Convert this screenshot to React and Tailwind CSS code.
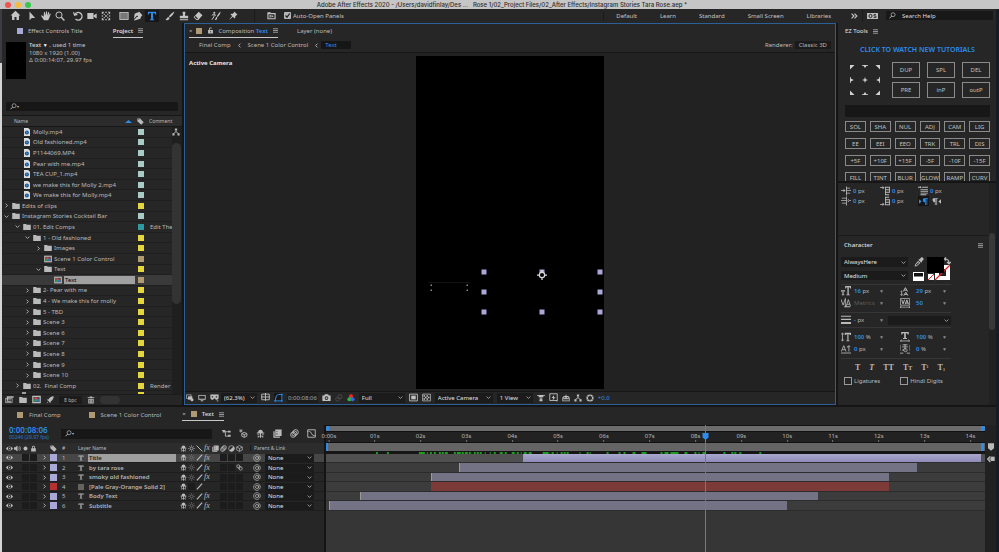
import React from 'react';
import clsx from 'clsx';

// All glyphs are drawn on a 12x12 grid
const line = { fill: 'none', stroke: 'currentColor', strokeWidth: 1.2 };
const glyphs = {
  home: <path d="M6 .8 0.6 6h1.6v5h2.7V7.6h2.2V11h2.7V6h1.6z" />,
  cursor: <path d="M3 .5v10.6l2.7-2.6h4.1z" />,
  hand: <path d="M3.2 7 1.4 5.4c-.8-.5-1.4.3-1 .9L3.6 11h5l1.4-3 1.6-4.2c.2-.8-.9-1.1-1.2-.4L9.2 6l.6-4c0-.8-1.1-1-1.3-.1L7.6 5.3 7.2 1c-.1-.8-1.3-.8-1.3 0v4.3L4.7 1.7c-.3-.8-1.4-.4-1.2.4z" />,
  zoom: <g {...line}><circle cx="4.8" cy="4.8" r="3.7" /><path d="m7.5 7.5 3.8 3.8" strokeWidth="1.7" /></g>,
  search: <g {...line}><circle cx="7" cy="4.6" r="3.4" /><path d="M4.6 7 .8 10.8" strokeWidth="1.6" /></g>,
  rotate: <g {...line} strokeWidth="1.5"><path d="M2.2 4.2A4.6 4.6 0 1 1 3 9.6" /><path d="M.6 1.6 2 5l3.3-1" /></g>,
  camera: <path d="M.4 2.5h7.4v7H.4zM8.2 5.2l3.4-2.3v6.2L8.2 6.8z" />,
  anchor: <g><path d="M1 1h2.5v1.2H2.2v1.3H1zM8.5 1H11v2.5H9.8V2.2H8.5zM1 8.5h1.2v1.3h1.3V11H1zM9.8 8.5H11V11H8.5V9.8h1.3zM5 1h2v1.2H5zM5 9.8h2V11H5zM1 5h1.2v2H1zM9.8 5H11v2H9.8z" /><path d="M3 3l2 .5L3.5 5zM9 3l-2 .5L8.5 5zM3 9l2-.5L3.5 7zM9 9l-2-.5L8.5 7zM5 5h2v2H5z" /></g>,
  rect: <rect x="1" y="1.7" width="10" height="8.6" fill="#777" stroke="currentColor" />,
  pen: <path d="M7.2.7 11.3 5 10 6.2 8.7 9.4 1.9 11.3l-.7-.6 3.4-3.5 1.1.1.2-1.4-1.1-.4-3.7 3.9.9-6L5 1.9 6 2z" />,
  type: <path d="M1 1h10v3.2H9.8C9.6 2.8 9 2.4 7.2 2.4v6.9c0 .6.3.8 1.4.8V11H3.4v-.9c1.1 0 1.4-.2 1.4-.8V2.4C3 2.4 2.4 2.8 2.2 4.2H1z" />,
  brush: <path d="M11.4.6c-2.9 1.5-5.3 3.5-6.8 6l1.3 1.2C8.4 6 10.3 3.6 11.4.6zM4 7.1C2 7.3 2.8 9.5.4 10.6 3 11.7 5.5 10.6 5.3 8.4z" />,
  stamp: <path d="M4.6 1h2.8c.9 1.4-.5 2.5-.2 4.7H11v3H1v-3h3.8c.3-2.2-1.1-3.3-.2-4.7zM1 9.8h10V11H1z" />,
  eraser: <path d="M6.8.8 11.4 5 6.3 10.9H4.2L.7 7.6zM2 7.4 5 10l1-1.1L3 6.1z" fillRule="evenodd" />,
  roto: <g><path d="M11.7.6C9.4 2.2 8 4 7 6.5l1 .8c2-2 3.2-4 3.7-6.7zM6.5 7C5.4 8 6 9.5 4.3 10.7c2 .4 3.6-.7 3.2-2.8z" /><circle cx="4" cy="2" r="1.2" /><path d="M3.3 3.5 1 5.3M3.8 3.5 3.5 7 1 10.5M4 4l2 1.5" {...line} /></g>,
  pin: <path d="M7 .6 11.4 5l-1.2.4-2 2.2.1 1.7-.8.7-2.3-2.3L1 11.3l-.3-.3 3.6-4.2L2 4.5l.8-.7 1.6.1 2.3-2z" />,
  folderCut: <path d="M.5 1.5h4l1 1.2h6V11h-11zM2 4.2v5.4h8V4.2zM3.4 5.2H5v3.4H3.4zM6 5.2l3 1.7-3 1.7z" fillRule="evenodd" />,
  folder: <path d="M.3 1.5h4.3l1 1.3h6.1v7.7H.3z" />,
  film: <g><path d="M1.5 0h6.2l2.8 2.8V12h-9z" fill="#dcdcdc" /><circle cx="5.8" cy="6.6" r="3" fill="#1d4f8e" /><path d="m4.8 5 2.6 1.5-2.6 1.6z" fill="#4ea0ee" /></g>,
  comp: <g><path d="M.3 1h11.4v10H.3z" fill="#c4c4c4" /><path d="M1.8 2.6h8.4v6.8H1.8z" fill="#4b4b4b" /><circle cx="5.3" cy="4.8" r="1.9" fill="#df4434" /><circle cx="7.6" cy="7" r="1.9" fill="#3974d0" /><circle cx="4.4" cy="7.4" r="1.7" fill="#2e9f57" /></g>,
  flow: <g><path d="M4.3.6h3.4v3.2H4.3zM.6 8h3.2v3.2H.6zM8.2 8h3.2v3.2H8.2z" /><path d="M6 3.5v2.7M2.2 8.2 6 5.6l3.8 2.6" {...line} /></g>,
  tag: <path d="M.6 1h4.8l6.1 6.1-4.3 4.3L.6 5.5zM2.4 2v1.5h1.5V2z" fillRule="evenodd" />,
  interpret: <g><path d="M2.5 1.5h9v2.2h-7v4h-2z" /><path d="M.5 4.5h9v5.6h-9z" fill="none" stroke="currentColor" /><path d="M2 6h2v1H2zM5 6h3v1H5zM2 8h6v1H2z" /></g>,
  rocket: <path d="M11.5.5C7.5.5 5 2.6 4 4.8L1 5.6l2.2 1.5 1.5 1.5L6.5 11l.8-3C9.7 6.7 11.5 4.3 11.5.5zM2.7 8.5.6 11.4l3-2z" />,
  trash: <path d="M4.3.7h3.4v1H11v1.4H1V1.7h3.3zM1.9 4h8.2v7.3H1.9zm1.7 1.2v4.9h.8V5.2zm2 0v4.9h.8V5.2zm2 0v4.9h.8V5.2z" fillRule="evenodd" />,
  lock: <path d="M2 5.5h8v5.7H2zM3.5 5.5V3.6a2.5 2.5 0 0 1 5 0v1.9H7.2V3.7a1.2 1.2 0 0 0-2.4 0v1.8z" />,
  unlock: <path d="M1.8 5h8.4v6.3H1.8zM5.5 7v2.4h1V7zM3.4 5V3.3c0-3.2 4.8-3.5 5.3-.8H7.3c-.5-1-2.5-.7-2.5 1V5z" fillRule="evenodd" />,
  multi: <g><path d="M.7 1.2h7v5.6h-7z" fill="none" stroke="currentColor" /><path d="M3 3.5h6.5v5H3z" /><circle cx="9" cy="8.7" r="2.3" /></g>,
  monitor: <path d="M.5 1.5h11v7h-11zm1.2 1.2v4.6h8.6V2.7zM4 9.3h4v1.5H4z" fillRule="evenodd" />,
  mask: <path d="M.5 2h11v4.5C11.5 8 10 9 8.5 9S6.7 7 6 7s-1 2-2.5 2-3-1-3-2.5zM2.3 4.3v1.8h2V4.3zm5.3 0v1.8h2V4.3zM8.5 10h3L10 11.7z" fillRule="evenodd" />,
  grid: <g {...line}><path d="M1 1.5h10V9H1zM6 0v10.5M0 5.3h12" /></g>,
  shape: <g fill="none" stroke="#2d8ceb" strokeWidth="1.3"><path d="M1.5 10.5 3 4c1.5-2 4-2.3 7.5-2v8.5z" /><path d="M.5 9.5h2v2h-2zM9.5 9.5h2v2h-2zM9.5 1h2v2h-2z" fill="#2d8ceb" strokeWidth=".2" /></g>,
  snapshot: <path d="M3.8 1.5h4.4l.8 1.7h2.5v7.5H.5V3.2H3zM6 4.3a2.5 2.5 0 1 0 0 5 2.5 2.5 0 0 0 0-5zm0 1.2a1.3 1.3 0 1 1 0 2.6 1.3 1.3 0 0 1 0-2.6z" fillRule="evenodd" />,
  ghost: <g {...line} stroke="#505050"><circle cx="7.5" cy="4" r="3" /><circle cx="3.7" cy="8" r="2.7" /></g>,
  rgb: <g><circle cx="6" cy="3.3" r="3" fill="#f02b26" /><circle cx="3.6" cy="7.7" r="3" fill="#25bd3b" /><circle cx="8.3" cy="7.7" r="3" fill="#3467ef" /></g>,
  roi: <g><path d="M.8 1.5h10.4v9H.8z" {...line} /><path d="M3 3.5h6v5H3z" /></g>,
  checker: <g><path d="M.8 1.5h10.4v9H.8z" {...line} strokeWidth="1" /><path d="M2 3h2v2H2zM6 3h2v2H6zM4 5h2v2H4zM8 5h2v2H8zM2 7h2v2H2zM6 7h2v2H6z" /></g>,
  pixel: <path d="M0 1.5h12v1.2H9.5v2h-7v-2H0zM4 5.5h4v1.2H6.6V8h1.7v3H3.7V8h1.7V6.7H4z" />,
  fast: <g><path d="M1 1h10v9H1z" {...line} /><path d="M6.8 2.5 3.5 6.7h2L4.7 10l4-4.5H6.5zM9 10h3l-1.5 1.7z" /></g>,
  timelineIcon: <path d="M.5 5h1.2v4.6h8.6V5h1.2v6H.5zM5.3 1h1.4v2H10v5H2V3h3.3zM3.4 4.5v2h1.5v-2zm3.7 0v2h1.5v-2z" fillRule="evenodd" />,
  aperture: <g><circle cx="6" cy="6" r="4.2" fill="none" stroke="currentColor" strokeWidth="2.3" /><path d="M6 .8v4M10.5 3.5 7 5.5M10.5 8.5 7 6.5M6 11.2v-4M1.5 8.5 5 6.5M1.5 3.5 5 5.5" stroke="#262626" strokeWidth=".7" /></g>,
  network: <g><path d="M0 2h4M4.5 4.5v5h4M4 3.7h4" {...line} /><path d="M1 1.5h3.5v3H1zM8 2.2h3.5v2.6H8zM8 7.7h3.5v2.6H8z" /></g>,
  draft: <g {...line}><path d="M7 4.5 10.5 6v3.5L7 11.2 3.7 9.5V6zM3.7 6 7 7.5 10.5 6M7 7.5v3.5" /><path d="M2.5 0v5M0 2.5h5M.8.8l3.4 3.4M4.2.8.8 4.2" strokeWidth=".8" /></g>,
  shy: <path d="M6 1c2 0 3.2 1.5 3.2 3.5H11V6H6.7v3h3v2.2H8.3V10H6.7v1.5H5.3V10H3.7v1.2H2.3V9h3V6H1V4.5h1.8C2.8 2.5 4 1 6 1zM2 6.5h1.5V8H2zM8.5 6.5H10V8H8.5z" />,
  blend: <path d="M3 .8h8.5v8.5H3zM.5 3h1.7v7h7v1.5H.5zM4.7 2.5v1.3h1.2V2.5zm0 3.3v1.4h1.2V5.8z" fillRule="evenodd" />,
  blur: <g {...line}><circle cx="7.7" cy="4.2" r="3.4" /><circle cx="5.9" cy="6" r="3.4" /><circle cx="4.2" cy="7.7" r="3.4" /></g>,
  graph: <g {...line}><path d="M1 1h10v10H1z" /><path d="M3 3c3 0 2.5 5.5 6.5 6M0 3h2M10 9h2" /></g>,
  eye: <path d="M0 6c2.7-4.7 9.3-4.7 12 0-2.7 4.7-9.3 4.7-12 0zm6-2.8a2.8 2.8 0 1 0 0 5.6 2.8 2.8 0 0 0 0-5.6zm0 1.6a1.2 1.2 0 1 1 0 2.4 1.2 1.2 0 0 1 0-2.4z" fillRule="evenodd" />,
  sound: <g><path d="M0 4h2.3L6 1v10L2.3 8H0z" /><path d="M7.7 3.5c1.3 1.5 1.3 3.5 0 5M9.5 2c2 2.5 2 5.5 0 8" {...line} /></g>,
  solo: <circle cx="6" cy="6" r="3.4" />,
  sun: <g><circle cx="6" cy="6" r="2.4" {...line} /><path d="M6 0v2.5M6 9.5V12M0 6h2.5M9.5 6H12M2 2l1.5 1.5M10 2 8.5 3.5M2 10l1.5-1.5M10 10 8.5 8.5" {...line} strokeWidth=".9" /></g>,
  back: <path d="m1 1 10 10" {...line} strokeWidth="1.7" />,
  slash: <path d="M10.5 1 1.5 11" {...line} strokeWidth="2" />,
  half: <g><circle cx="6" cy="6" r="4.8" {...line} /><path d="M9.5 2.5a4.8 4.8 0 0 1-7 7z" /></g>,
  cube: <g {...line}><path d="M6 1 10.8 3.5v5L6 11 1.2 8.5v-5zM1.2 3.5 6 6l4.8-2.5M6 6v5" /></g>,
  chars: <g {...line}><circle cx="3.8" cy="4" r="2.6" /><circle cx="8" cy="7.8" r="2.8" /><path d="M3 5.5 7 9M5 2.5l4 3.5" /></g>,
  whip: <g {...line} strokeWidth="1.1"><path d="M8.8 10.2A5 5 0 1 1 10.9 5v2c0 2-2.4 2-2.4 0V3.5" /><circle cx="6" cy="6" r="2.3" /></g>,
  dropper: <path d="M8.3.8c1.7-1.3 4.1.8 2.8 2.7L9.3 5.3l.4.5-1 1L5.3 3.3l1-1 .5.5zM5 4.4l2.6 2.7-4.3 4-2.5.4L1.2 9zM2.2 9.4l-.1.9.9-.2 3-2.9-.8-.8z" fillRule="evenodd" />,
  size: <path d="M5 0h7v3h-1c-.1-1-.5-1.4-1.7-1.4v8.6h1.3V11H6.4v-.8h1.3V1.6C6.5 1.6 6.1 2 6 3H5zM0 5h4.7v2H4c-.1-.7-.3-.9-.9-.9v4.1h.8v.8H.9v-.8h.8V6.1c-.6 0-.8.2-.9.9H0z" />,
  leading: <g><path d="M6.5 2 9 6.5M6.5 2 4 6.5M5 5h3M7 7.5l2.5 4M7 7.5l-2.5 4M5.5 10h3" {...line} /><path d="M2 6v5M.6 10 2 11.5 3.4 10M2 5.5l-1 1.3" {...line} strokeWidth="1" /></g>,
  kern: <g {...line}><path d="m0 1.5 2.5 7L5 1.5M6 10.5 8.8 2l2.7 8M5.2 0v11M7 7.5h3.5" strokeWidth="1" /><path d="M4 10.5h7" /></g>,
  track: <g {...line}><path d="M.5.6h11v8H.5z" strokeWidth=".9" /><path d="m2 2 1.7 5L5.5 2M6.3 7.5l1.9-5.3 2 5.3M7 6h2.5" /><path d="M0 11h12M1.5 9.7 0 11l1.5 1M10.5 9.7 12 11l-1.5 1" strokeWidth=".9" /></g>,
  lines: <path d="M0 1h12v1.1H0zM0 4.5h12V6H0zM0 8.5h12v2.2H0z" />,
  vscale: <g><path d="M4.5 1H12v2.6h-1c-.2-.8-.5-1-2-1v7.6h1.2v.8H6.4v-.8h1.2V2.6c-1.5 0-1.9.2-2.1 1h-1z" /><path d="M1.8 1.5v9M.4 3 1.8 1 3.2 3M.4 9l1.4 2 1.4-2" {...line} strokeWidth="1" /></g>,
  hscale: <g><path d="M1.5 0h9v3H9.4c-.2-1-.5-1.4-2.4-1.4v5.7h1.4v1.2H3.6V7.3H5V1.6c-1.9 0-2.2.4-2.4 1.4H1.5z" /><path d="M.5 10.7h11M2 9.3.5 10.7 2 12M10 9.3l1.5 1.4L10 12" {...line} strokeWidth="1" /></g>,
  baseline: <g {...line}><path d="M.5 9 3.3 2 6 9M1.5 6.8H5M7 3.5h2M0 10.8h12M9.5 9V2M8 3.5 9.5 2 11 3.5" strokeWidth="1" /></g>,
  tsume: <g {...line} strokeWidth="1"><path d="M3 1h6M2.5 3.5h7M6 0v8M3.5 8.5c0-4 5-4 5-1s-4 2-5-1M0 11h4M8 11h4M0 1v7M12 1v7" /></g>,
  indentL: <path d="M6 .5h1v11H6zM7 2h4v1H7zM7 5h5v1H7zM7 8h4v1H7zM0 5h4v1H0zM3 3.5 5.5 5.5 3 7.5z" />,
  indentR: <path d="M6 .5h1v11H6zM1 2h5v1H1zM0 5h6v1H0zM1 8h5v1H1zM8 5h4v1H8zM9.5 3.5 7.3 5.5l2.2 2z" />,
  spaceB: <path d="M0 1.5h4v1H0zM3 0l2.5 2L3 4zM6 1h6v1H6zM6 4h6v1H6zM6 7h6v1H6zM6 10h5v1H6zM6 1h1v10H6zM11 1h1v6h-1z" />,
  spaceA: <path d="M0 9.5h4v1H0zM3 8l2.5 2L3 12zM6 1h5v1H6zM6 4h6v1H6zM6 7h6v1H6zM6 10h6v1H6zM6 1h1v10H6zM11 4h1v6h-1z" />,
  first: <path d="M0 1h3v1H0zM2.5 0 4.5 1.5 2.5 3zM5 1h7v1H5zM3 4h9v1H3zM3 6h9v1H3zM3 8h9v1H3zM3 10h7v1H3z" />,
  ltr: <path d="M0 3v6l3.5-3zM6.5 1.5H12v1h-1v8h-1v-8H9v8H8V7C4.5 7 4.5 1.5 6.5 1.5z" />,
  rtl: <path d="M12 3v6L8.5 6zM1.8 1.5h6v1h-1v8h-1v-8h-1v8h-1V7C.5 7 0 1.5 1.8 1.5z" />,
  marker: <path d="M1.5.5h9v7.2L6 11.5 1.5 7.7z" />,
  compButton: <g><path d="M5.5 2.5h6V9h-6z" /><path d="M5 2 1 6l4 4.5M3 6h4" {...line} strokeWidth="1.8" /></g>,
};

const Icon = ({ name, className = 'size-2' }) => (
  <svg viewBox="0 0 12 12" className={clsx('shrink-0', className)} fill="currentColor" aria-hidden="true">
    {glyphs[name]}
  </svg>
);

const Chevron = ({ className }) => (
  <svg viewBox="0 0 8 8" className={clsx('size-[5px] shrink-0', className)} fill="none" stroke="currentColor" strokeWidth="1.4">
    <path d="m1 2.5 3 3 3-3" />
  </svg>
);

const Burger = () => (
  <svg viewBox="0 0 10 10" className="size-[5px] shrink-0" stroke="currentColor" strokeWidth="1.5">
    <path d="M0 1.5h10M0 5h10M0 8.5h10" />
  </svg>
);

const Dropdown = ({ label, value, className }) => (
  <div className={clsx('relative flex items-center bg-[#1b1b1b]', className)}>
    <select aria-label={label} defaultValue={value} className="h-full w-full appearance-none bg-transparent pl-[3px] pr-2 text-[#e0e0e0] outline-none">
      <option>{value}</option>
    </select>
    <Chevron className="pointer-events-none absolute right-[2px] text-[#a8a8a8]" />
  </div>
);

const toolGroups = [
  ['home'],
  ['cursor', 'hand', 'zoom'],
  ['rotate', 'camera', 'anchor'],
  ['rect', 'pen', 'type'],
  ['brush', 'stamp', 'eraser'],
];

const Toolbar = () => (
  <div className="flex h-[14px] shrink-0 items-center bg-[#262626] pb-px pl-[6px] pr-[3px] text-[#c4c4c4]">
    {toolGroups.map((group, i) => (
      <div key={i} className={clsx('flex', i === 0 ? 'mr-[3px]' : 'mr-1')}>
        {group.map(name => (
          <button
            key={name}
            aria-label={name}
            className={clsx('flex h-3 w-[14px] items-center justify-center', name === 'type' && 'bg-[#171717] text-[#2d8ceb]')}
          >
            <Icon name={name} className={name === 'home' ? 'size-[11px]' : 'size-[10px]'} />
          </button>
        ))}
      </div>
    ))}
    <div className="ml-[2px] flex gap-2">
      <button aria-label="Roto Brush"><Icon name="roto" className="size-[10px]" /></button>
      <button aria-label="Puppet Pin"><Icon name="pin" className="size-[9px]" /></button>
    </div>
    <div className="ml-4 h-3 w-px bg-[#1a1a1a]" />
    <button aria-label="Panels folder" className="ml-3"><Icon name="folderCut" className="size-[9px]" /></button>
    <label className="relative ml-2 flex items-center gap-[2px] whitespace-nowrap">
      <input type="checkbox" defaultChecked className="size-[7px] appearance-none rounded-[1px] bg-[#b5b5b5]" />
      <svg viewBox="0 0 7 7" className="pointer-events-none absolute left-0 size-[7px]" fill="none" stroke="#222" strokeWidth="1.2">
        <path d="m1.5 3.5 1.5 1.7 2.7-3.7" />
      </svg>
      Auto-Open Panels
    </label>
    <div className="ml-auto flex items-center gap-[23px] whitespace-nowrap border-l border-[#1a1a1a] pl-3">
      {['Default', 'Learn', 'Standard', 'Small Screen', 'Libraries'].map(name => (
        <button key={name}>{name}</button>
      ))}
    </div>
    <button aria-label="More workspaces" className="ml-5 mr-1">
      <svg viewBox="0 0 12 10" className="h-[6px] w-[7px]" fill="none" stroke="currentColor" strokeWidth="2"><path d="m1 1 4 4-4 4M6 1l4 4-4 4" /></svg>
    </button>
    <div className="flex h-3 items-center border-l border-[#1a1a1a] pl-1">
      <svg viewBox="0 0 22 12" className="h-[6px] w-[11px]">
        <path d="M0 0h22v12H0z" fill="#bdbdbd" />
        <circle cx="7" cy="6" r="3.2" fill="none" stroke="#262626" strokeWidth="2" />
        <path d="M18 3h-4v3h4v3h-5" fill="none" stroke="#262626" strokeWidth="1.6" />
      </svg>
    </div>
    <label className="ml-2 flex h-[9px] w-[107px] items-center gap-[6px] bg-[#181818] pl-[3px]">
      <Icon name="search" className="size-[7px]" />
      <input aria-label="Search Help" placeholder="Search Help" className="w-full min-w-0 bg-transparent outline-none placeholder:text-[#dcdcdc]" />
    </label>
  </div>
);

const items = [
  { name: 'Molly.mp4', level: 1, icon: 'film', color: 'mint' },
  { name: 'Old fashioned.mp4', level: 1, icon: 'film', color: 'mint' },
  { name: 'P1144069.MP4', level: 1, icon: 'film', color: 'mint' },
  { name: 'Pear with me.mp4', level: 1, icon: 'film', color: 'mint' },
  { name: 'TEA CUP_1.mp4', level: 1, icon: 'film', color: 'mint' },
  { name: 'we make this for Molly 2.mp4', level: 1, icon: 'film', color: 'mint' },
  { name: 'We make this for Molly.mp4', level: 1, icon: 'film', color: 'mint' },
  { name: 'Edits of clips', level: 0, icon: 'folder', color: 'yellow', arrow: 'closed' },
  { name: 'Instagram Stories Cocktail Bar', level: 0, icon: 'folder', color: 'mint', arrow: 'open' },
  { name: '01. Edit Comps', level: 1, icon: 'folder', color: 'teal', arrow: 'open', comment: 'Edit The' },
  { name: '1 - Old fashioned', level: 2, icon: 'folder', color: 'yellow', arrow: 'open' },
  { name: 'Images', level: 3, icon: 'folder', color: 'yellow', arrow: 'closed' },
  { name: 'Scene 1 Color Control', level: 3, icon: 'comp', color: 'sand' },
  { name: 'Text', level: 3, icon: 'folder', color: 'yellow', arrow: 'open' },
  { name: 'Text', level: 4, icon: 'comp', color: 'sand', selected: true },
  { name: '2- Pear with me', level: 2, icon: 'folder', color: 'yellow', arrow: 'closed' },
  { name: '4 - We make this for molly', level: 2, icon: 'folder', color: 'yellow', arrow: 'closed' },
  { name: '5 - TBD', level: 2, icon: 'folder', color: 'yellow', arrow: 'closed' },
  { name: 'Scene 3', level: 2, icon: 'folder', color: 'yellow', arrow: 'closed' },
  { name: 'Scene 6', level: 2, icon: 'folder', color: 'yellow', arrow: 'closed' },
  { name: 'Scene 7', level: 2, icon: 'folder', color: 'yellow', arrow: 'closed' },
  { name: 'Scene 8', level: 2, icon: 'folder', color: 'yellow', arrow: 'closed' },
  { name: 'Scene 9', level: 2, icon: 'folder', color: 'yellow', arrow: 'closed' },
  { name: 'Scene 10', level: 2, icon: 'folder', color: 'yellow', arrow: 'closed' },
  { name: '02.  Final Comp', level: 1, icon: 'folder', color: 'yellow', arrow: 'closed', comment: 'Render' },
];

const labelColors = {
  mint: 'bg-[#a9cbc5]',
  yellow: 'bg-[#e4d63f]',
  teal: 'bg-[#2f9ba0]',
  sand: 'bg-[#b09a74]',
};

const indents = ['pl-[2px]', 'pl-[13px]', 'pl-[23px]', 'pl-[34px]', 'pl-[44px]'];

const ProjectItem = ({ item }) => (
  <li className={clsx('flex min-h-0 flex-1 items-center border-b border-[#1f1f1f]', item.selected && 'bg-[#3a3a3a]')}>
    <div className={clsx('flex min-w-0 flex-1 items-center', indents[item.level])}>
      <span className="flex w-2 shrink-0">
        {item.arrow && <Chevron className={item.arrow === 'closed' && '-rotate-90'} />}
      </span>
      <Icon name={item.icon} />
      <span className={clsx('ml-[2px] whitespace-pre', item.selected && 'flex-1 bg-[#a0a0a0] pl-px text-black')}>{item.name}</span>
    </div>
    <span className={clsx('ml-[3px] size-[6px] shrink-0', labelColors[item.color])} />
    <span className="ml-[6px] w-[22px] shrink-0 overflow-hidden whitespace-nowrap">{item.comment}</span>
  </li>
);

const ProjectPanel = () => (
  <section className="flex w-[180px] shrink-0 flex-col bg-[#262626]">
    <div className="flex h-[15px] items-end pl-[15px]">
      <span className="mb-1 size-[6px] bg-[#a9a8d6]" />
      <button className="ml-[5px] h-[13px] pb-[2px]">Effect Controls Title</button>
      <div className="ml-[30px] flex h-[13px] items-center gap-[5px] border-b border-[#c8c8c8] pb-px">
        <button className="font-semibold text-[#dcdcdc]">Project</button>
        <Burger />
      </div>
    </div>
    <div className="flex gap-[3px] pl-1 pt-1">
      <div className="h-[37px] w-5 bg-black" />
      <div className="leading-[8px]">
        <p className="leading-[7px] text-[#c8c8c8]"><b className="font-semibold">Text</b> <span className="text-[5px] text-white">▼</span> , used 1 time</p>
        <p>1080 x 1920 (1.00)</p>
        <p className="leading-[7px]">Δ 0:00:14:07, 29.97 fps</p>
      </div>
    </div>
    <label className="ml-1 mr-1 mt-[23px] flex h-[9px] items-center bg-[#171717] pl-1">
      <Icon name="search" className="size-[7px]" />
      <span className="text-[4px]">▾</span>
      <input aria-label="Search project" className="w-full bg-transparent outline-none" />
    </label>
    <div className="mt-1 flex h-[12px] shrink-0 items-center border-y border-[#171717] bg-[#2c2c2c] pl-3 text-[5px]">
      <span>Name</span>
      <svg viewBox="0 0 7 3" className="ml-auto h-[3px] w-[7px]"><path d="M0 3 3.5 0 7 3z" fill="#2d8ceb" /></svg>
      <Icon name="tag" className="ml-[5px] size-[7px]" />
      <span className="ml-[5px] w-[33px]">Comment</span>
    </div>
    <div className="flex min-h-0 flex-1">
      <div className="flex min-w-0 flex-1 flex-col">
        <ul className="flex min-h-0 flex-1 flex-col">
          {items.map((item, i) => <ProjectItem key={i} item={item} />)}
        </ul>
        <div className="flex h-[2px] shrink-0 items-start overflow-hidden pl-5">
          <span className="h-[2px] w-1 bg-[#a0a0a0]" />
          <span className="ml-auto mr-[28px] h-[2px] w-[6px] bg-[#e4d63f]" />
        </div>
      </div>
      <div className="w-[10px] bg-[#1f1f1f]">
        <Icon name="flow" className="mb-[7px] mt-px size-2" />
        <div className="h-[161px] w-[9px] rounded-full bg-[#333]" />
      </div>
    </div>
    <div className="flex h-[11px] shrink-0 items-center gap-[5px] border-t border-[#1b1b1b] pl-[3px] text-[5px]">
      <button aria-label="Interpret footage"><Icon name="interpret" className="size-[9px]" /></button>
      <button aria-label="New folder"><Icon name="folder" className="size-2" /></button>
      <button aria-label="New composition"><Icon name="comp" className="size-[9px]" /></button>
      <button aria-label="Project settings"><Icon name="rocket" className="size-2" /></button>
      <button className="h-2 bg-[#1b1b1b] px-[5px]">8 bpc</button>
      <button aria-label="Delete"><Icon name="trash" className="size-2" /></button>
      <span className="h-2 w-5 rounded-full bg-[#333]" />
    </div>
  </section>
);

const handles = [
  'left-[36%] top-[65%]', 'left-[67%] top-[65%]', 'left-[98%] top-[65%]',
  'left-[36%] top-[71%]', 'left-[98%] top-[71%]',
  'left-[36%] top-[77%]', 'left-[67%] top-[77%]', 'left-[98%] top-[77%]',
];

const CompositionPanel = () => (
  <section className="flex min-w-0 flex-1 flex-col border border-[#2a5f98] bg-[#262626]">
    <div className="flex h-[14px] items-end pl-1">
      <div className="flex h-[13px] items-center border-b border-[#c8c8c8] pb-px">
        <button aria-label="Close tab">×</button>
        <span className="ml-1 size-[6px] bg-[#b09a74]" />
        <Icon name="unlock" className="ml-[5px] size-[7px]" />
        <button className="ml-1 mr-[5px] whitespace-nowrap">Composition <b className="font-semibold text-[#2d8ceb]">Text</b></button>
        <Burger />
      </div>
      <button className="ml-[19px] h-[13px] pb-[2px]">Layer (none)</button>
    </div>
    <nav className="flex h-[15px] shrink-0 items-center gap-[6px] border-b border-[#161616] pl-[14px] pr-1">
      <a href="#final">Final Comp</a>
      <Chevron className="rotate-90" />
      <a href="#scene-1">Scene 1 Color Control</a>
      <Chevron className="rotate-90" />
      <a href="#text" className="-ml-1 w-[30px] bg-[#161616] pl-1 text-[#2d8ceb]">Text</a>
      <span className="ml-auto">Renderer:</span>
      <button className="-ml-1 bg-[#1b1b1b] px-1">Classic 3D</button>
    </nav>
    <div className="relative flex min-h-0 flex-1 justify-center bg-[#222] pb-[2px] pt-[3px]">
      <span className="absolute left-1 top-[6px] font-bold text-[#e6e6e6]">Active Camera</span>
      <div className="relative aspect-[9/16] h-full bg-black">
        {handles.map(pos => (
          <span key={pos} className={clsx('absolute size-[5px] -translate-x-1/2 -translate-y-1/2 bg-[#a9a8d6]', pos)} />
        ))}
        <svg viewBox="0 0 12 12" className="absolute left-[67%] top-[66%] size-[10px] -translate-x-1/2 -translate-y-1/2" fill="none" stroke="#d6d6e0" strokeWidth="1.5">
          <circle cx="6" cy="6" r="3.2" fill="#000" />
          <path d="M6 0v3M6 9v3M0 6h3M9 6h3" />
        </svg>
        <svg viewBox="0 0 42 10" className="absolute left-[6%] top-[68%] w-[42px]" fill="#8886a8">
          <path d="M0 .5h42V1H0z" fill="#222" />
          <path d="M2.5 2.5H4V4H2.5zM38.5 2.5H40V4h-1.5zM2.5 7.5H4V9H2.5zM38.5 7.5H40V9h-1.5z" />
        </svg>
      </div>
    </div>
    <div className="flex h-[13px] shrink-0 items-center gap-1 border-t border-[#161616] pl-px text-[#c0c0c0]">
      <Icon name="multi" />
      <Icon name="monitor" />
      <Icon name="mask" className="size-[9px]" />
      <Dropdown label="Magnification" value="(62.3%)" className="-ml-[2px] h-[10px] w-9" />
      <Icon name="grid" className="size-[9px]" />
      <span className="bg-[#171717]"><Icon name="shape" className="size-[9px]" /></span>
      <button className="h-[10px] bg-[#1d1d1d] px-px text-[#a6a6a6]">0:00:08:06</button>
      <Icon name="snapshot" className="size-[9px]" />
      <Icon name="ghost" />
      <Icon name="rgb" />
      <Dropdown label="Resolution" value="Full" className="h-[10px] w-[46px]" />
      <Icon name="roi" className="size-[9px]" />
      <Icon name="checker" className="size-[9px]" />
      <Dropdown label="3D view" value="Active Camera" className="h-[10px] w-[58px]" />
      <Dropdown label="View layout" value="1 View" className="h-[10px] w-9" />
      <Icon name="pixel" />
      <Icon name="fast" className="size-[9px]" />
      <Icon name="timelineIcon" />
      <Icon name="flow" />
      <Icon name="aperture" />
      <span className="text-[#2d8ceb]">+0.0</span>
    </div>
  </section>
);

const ezRows = [
  'SOL', 'SHA', 'NUL', 'ADJ', 'CAM', 'LIG',
  'EE', 'EEI', 'EEO', 'TRK', 'TRL', 'DIS',
  '+5F', '+10F', '+15F', '-5F', '-10F', '-15F',
  'FILL', 'TINT', 'BLUR', 'GLOW', 'RAMP', 'CURV',
];

const anchors = [
  'M0 0h6L0 6z', 'M0 0h8v1H6L4 4 2 1H0z', 'M8 0H2l6 6z',
  'M0 0h1v2l4 2-4 2v2H0z', 'M4 0l1 3 3 1-3 1-1 3-1-3-3-1 3-1z', 'M8 0H7v2L3 4l4 2v2h1z',
  'M0 8h6L0 2z', 'M0 8h8V7H6L4 4 2 7H0z', 'M8 8H2l6-6z',
];

const EzTools = () => (
  <section className="flex h-[158px] shrink-0 flex-col overflow-hidden bg-[#262626]">
    <div className="flex h-[15px] shrink-0 items-center gap-[5px] pl-[7px] pt-px">
      <span className="text-[#e0e0e0]">EZ Tools</span>
      <Burger />
    </div>
    <div className="pl-[7px] pr-[6px] text-[#c0c0c0]">
      <a href="#tutorials" className="mt-2 block text-center text-[7px] font-semibold leading-[8px] text-[#2d8ceb]">CLICK TO WATCH NEW TUTORIALS</a>
      <div className="mt-2 flex justify-between">
        <div className="ml-[2px] grid w-9 grid-cols-3 place-items-center">
          {anchors.map(d => (
            <svg key={d} viewBox="0 0 8 8" className="size-[6px]" fill="#d2d2d2"><path d={d} /></svg>
          ))}
        </div>
        <div className="grid grid-cols-3 gap-x-[7px] gap-y-1">
          {['DUP', 'SPL', 'DEL', 'PRE', 'inP', 'outP'].map(name => (
            <button key={name} className="h-4 w-7 border border-[#8a8a8a]">{name}</button>
          ))}
        </div>
      </div>
      <input aria-label="Script input" className="mt-[7px] block h-3 w-full bg-[#171717] outline-none" />
      <div className="mt-1 grid grid-cols-6 gap-x-1 gap-y-[6px]">
        {ezRows.map(name => (
          <button key={name} className="flex h-[11px] items-center justify-center border border-[#8a8a8a]">{name}</button>
        ))}
      </div>
    </div>
  </section>
);

const Value = ({ icon, value, unit, muted, gap = 'ml-[3px]' }) => (
  <div className="flex items-center">
    <Icon name={icon} className="size-[10px]" />
    <span className={clsx('whitespace-nowrap', gap)}>
      <button className={muted ? 'text-[#5c5c5c]' : 'font-semibold text-[#2d8ceb]'}>{value}</button> {unit}
    </span>
  </div>
);

const CharValue = ({ className, ...props }) => (
  <div className={clsx('flex items-center justify-between', className)}>
    <Value {...props} />
    <span className="text-[5px] text-[#8a8a8a]">▼</span>
  </div>
);

const CharRow = ({ left, right }) => (
  <div className="flex h-[12px] items-center gap-4">
    <CharValue {...left} className="w-[43px]" />
    {right && <CharValue {...right} gap="ml-[6px]" className="w-[47px]" />}
  </div>
);

const CharacterPanel = () => (
  <section className="flex min-h-0 flex-1 bg-[#262626]">
    <div className="flex-1">
      <div className="grid h-[53px] grid-cols-[39px_38px_1fr] content-start border-b border-[#1b1b1b] pl-[3px] pt-[3px]">
        <Value icon="indentL" value="0" unit="px" gap="ml-[2px]" />
        <Value icon="spaceB" value="0" unit="px" gap="ml-[2px]" />
        <Value icon="first" value="0" unit="px" gap="ml-[2px]" />
        <Value icon="indentR" value="0" unit="px" gap="ml-[2px]" />
        <Value icon="spaceA" value="0" unit="px" gap="ml-[2px]" />
        <div className="flex gap-[3px]">
          <button aria-label="Left to right" className="bg-[#151515] px-px text-[#2d8ceb]"><Icon name="ltr" className="size-[9px]" /></button>
          <button aria-label="Right to left"><Icon name="rtl" className="size-[9px]" /></button>
        </div>
      </div>
      <div className="flex items-center justify-between pb-2 pl-[6px] pr-[6px] pt-[5px]">
        <h2 className="font-semibold text-[#d0d0d0]">Character</h2>
        <Burger />
      </div>
      <div className="w-[113px] pl-[3px]">
        <div className="flex gap-[5px]">
          <div className="flex flex-1 flex-col gap-1">
            <Dropdown label="Font family" value="AlwaysHere" className="h-[10px]" />
            <Dropdown label="Font style" value="Medium" className="h-[9px]" />
          </div>
          <div className="flex w-[11px] flex-col items-center justify-between">
            <Icon name="dropper" className="size-[10px]" />
            <svg viewBox="0 0 11 9" className="h-[9px] w-[11px]"><path d="M0 0h11v9H0z" fill="#fff" /><path d="M1 1h9v3.5H1z" fill="#111" /></svg>
          </div>
          <svg viewBox="0 0 24 24" className="-ml-[2px] size-6">
            <path d="M8 8h15v15H8z" fill="#fff" />
            <path d="M12 12h7v7h-7z" fill="#222" />
            <path d="M8 23 23 8" stroke="#e02020" strokeWidth="1.3" />
            <path d="M0 0h17v16H0z" fill="#000" />
            <path d="M1 17h6v6H1z" fill="#fff" />
            <path d="m1 23 6-6" stroke="#e02020" />
            <path d="M18 2c2.5 0 4 1 4 4M20 5l2 2 2-2M19 .5 17.5 2 19 3.5" fill="none" stroke="#bbb" strokeWidth="1.2" />
          </svg>
        </div>
        <div className="mt-[3px] border-t border-[#363636]">
          <CharRow left={{ icon: 'size', value: '16', unit: 'px' }} right={{ icon: 'leading', value: '29', unit: 'px' }} />
          <CharRow left={{ icon: 'kern', value: 'Metrics', muted: true }} right={{ icon: 'track', value: '50' }} />
        </div>
        <div className="mt-[3px] flex items-center border-y border-[#363636] py-px">
          <CharRow left={{ icon: 'lines', value: '-', unit: 'px' }} />
          <Dropdown label="Stroke order" value="" className="ml-1 h-[9px] flex-1" />
        </div>
        <div className="border-b border-[#363636] py-[3px]">
          <CharRow left={{ icon: 'vscale', value: '100', unit: '%' }} right={{ icon: 'hscale', value: '100', unit: '%' }} />
          <CharRow left={{ icon: 'baseline', value: '0', unit: 'px' }} right={{ icon: 'tsume', value: '0', unit: '%' }} />
        </div>
        <div className="flex h-[17px] items-center gap-[9px] pl-[14px] font-['Liberation_Serif',serif] text-[8px] font-bold text-[#b8b8b8]">
          <button>T</button>
          <button className="italic">T</button>
          <button>TT</button>
          <button>T<span className="text-[6px]">T</span></button>
          <button>T<sup className="text-[4px]">1</sup></button>
          <button>T<sub className="text-[4px]">1</sub></button>
        </div>
        <div className="flex gap-5 whitespace-nowrap pl-[3px] pt-px">
          {['Ligatures', 'Hindi Digits'].map(name => (
            <label key={name} className="flex items-center gap-[2px]">
              <input type="checkbox" className="size-2 appearance-none border border-[#9a9a9a]" />
              {name}
            </label>
          ))}
        </div>
      </div>
    </div>
    <div className="w-[7px] bg-[#212121] pt-[50px]">
      <div className="h-[97px] w-[6px] rounded-full bg-[#383838]" />
    </div>
  </section>
);

// start and end are seconds on the time ruler
const layers = [
  { name: 'Title', start: 4.23, end: 14.23, selected: true },
  { name: 'by tara rose', start: 2.83, end: 12.83, perChar: true },
  { name: 'smoky old fashioned', start: 2.23, end: 12.23 },
  { name: '[Pale Gray-Orange Solid 2]', start: 2.23, end: 12.23, solid: true },
  { name: 'Body Text', start: 0.67, end: 10.67 },
  { name: 'Subtitle', start: 0, end: 10 },
];

const DURATION = 14.23;
const pct = seconds => `${(seconds / DURATION) * 100}%`;

const Cell = ({ icon, box, className }) => (
  <span className={clsx('flex h-2 w-[8px] items-center justify-center', className)}>
    {icon ? <Icon name={icon} className="size-[7px]" /> : box && <span className="size-[7px] bg-[#1c1c1c]" />}
  </span>
);

const Fx = () => (
  <span className="flex h-2 w-[8px] items-center justify-center font-['Liberation_Serif',serif] text-[8px] italic">fx</span>
);

const LayerRow = ({ layer, index }) => (
  <tr className={clsx('border-b border-[#1d1d1d] odd:h-[9px] even:h-[10px]', layer.selected && 'bg-[#464646]')}>
    <td><div className="flex pl-[3px]"><Cell icon="eye" /><Cell /><Cell box /><Cell box /></div></td>
    <td><Chevron className="-rotate-90" /></td>
    <td><span className={clsx('block size-[7px]', layer.solid ? 'bg-[#b43331]' : 'bg-[#a9a8d6]')} /></td>
    <td className="pl-1">{index + 1}</td>
    <td>
      <div className="flex items-center gap-1">
        {layer.solid
          ? <span className="size-[6px] bg-[#67635a]" />
          : <Icon name="type" className="size-[6px]" />}
        <span className={clsx('h-2 flex-1 whitespace-nowrap pl-px font-semibold', layer.selected ? 'bg-[#a0a0a0] text-[#222]' : 'text-[#b5b5b5]')}>{layer.name}</span>
      </div>
    </td>
    <td>
      <div className="flex pl-[3px]">
        <Cell icon="shy" />
        <Cell icon={layer.solid ? null : 'sun'} box className="text-[#777]" />
        <Cell icon="slash" />
        {layer.solid ? <Cell /> : <Fx />}
        <Cell />
        <Cell box />
        <Cell box />
        <Cell icon={layer.perChar ? 'chars' : null} box />
      </div>
    </td>
    <td>
      <div className="flex items-center gap-1 pl-[3px]">
        <Icon name="whip" />
        <Dropdown label={`Parent of ${layer.name}`} value="None" className="h-2 w-[49px]" />
      </div>
    </td>
    <td />
  </tr>
);

const LayerTable = () => (
  <table className="w-full table-fixed border-collapse text-left [&_td]:py-0 [&_th]:py-0 [&_th]:font-normal">
    <colgroup>
      <col className="w-[40px]" /><col className="w-2" /><col className="w-2" /><col className="w-5" />
      <col /><col className="w-[74px]" /><col className="w-[66px]" /><col className="w-2" />
    </colgroup>
    <thead>
      <tr className="h-[11px] bg-[#2c2c2c] text-[5px]">
        <th><div className="flex pl-[3px]"><Cell icon="eye" /><Cell icon="sound" /><Cell icon="solo" /><Cell icon="lock" /></div></th>
        <th />
        <th><Icon name="tag" className="size-[7px]" /></th>
        <th className="pl-1">#</th>
        <th>Layer Name</th>
        <th>
          <div className="flex pl-[3px]">
            <Cell icon="shy" /><Cell icon="sun" /><Cell icon="back" /><Fx /><Cell icon="blend" /><Cell icon="blur" /><Cell icon="half" /><Cell icon="cube" />
          </div>
        </th>
        <th><span className="border-l border-[#1a1a1a] pl-[3px]">Parent &amp; Link</span></th>
        <th />
      </tr>
    </thead>
    <tbody>
      {layers.map((layer, i) => <LayerRow key={layer.name} layer={layer} index={i} />)}
    </tbody>
  </table>
);

// cached frame runs: [x, width] on a 653 unit wide ruler
const cached = [
  [47, 2], [58, 2], [90, 6], [98, 1], [101, 2], [105, 2], [110, 2], [113, 2], [116, 3], [125, 2], [128, 4],
  [133, 2], [136, 3], [140, 2], [145, 2], [148, 2], [151, 2], [156, 1], [161, 1], [165, 2], [171, 3], [176, 2],
  [183, 3], [188, 2], [192, 1], [195, 3], [200, 3], [214, 6], [223, 2], [228, 1], [232, 2], [235, 2], [238, 2],
  [251, 1], [258, 2], [261, 1], [278, 2], [290, 2], [295, 2], [304, 3], [313, 5], [332, 2], [336, 4], [342, 8],
  [356, 3], [366, 2], [370, 1], [374, 3], [395, 2], [403, 2], [406, 2], [411, 2], [431, 2],
];

const Tracks = () => (
  <div className="relative flex min-w-0 flex-1 flex-col border-l-2 border-[#141414] bg-[#363636]">
    <div className="flex h-[7px] items-stretch border-y border-[#111] bg-[#6c6c6c]">
      <span className="w-[3px] rounded-l-full bg-[#2d8ceb]" />
      <span className="ml-auto w-1 rounded-r-full bg-[#2d8ceb]" />
    </div>
    <div className="bg-[#222] pl-[3px] pr-1">
      <div className="relative h-[10px]">
        {Array.from({ length: 15 }, (_, s) => (
          <span key={s} className="absolute top-0 flex h-[10px] -translate-x-1/2 flex-col items-center justify-between" style={{ left: pct(s) }}>
            {s === 0 ? '0:00s' : `${String(s).padStart(2, '0')}s`}
            <i className="h-[2px] w-px shrink-0 bg-[#777]" />
          </span>
        ))}
      </div>
    </div>
    <div className="flex h-[9px] border-t border-[#111] bg-[#646464]">
      <span className="w-[2px] bg-[#2d8ceb]" />
      <span className="ml-auto mr-px w-[3px] bg-[#2d8ceb]" />
    </div>
    <div className="bg-[#151515] pl-[3px] pr-1 pt-px">
      <svg viewBox="0 0 653 2" preserveAspectRatio="none" className="block h-[2px] w-full" fill="#1d9c22">
        {cached.map(([x, w]) => <rect key={x} x={x} width={w} height="2" />)}
      </svg>
    </div>
    {layers.map((layer, i) => (
      <div
        key={layer.name}
        className={clsx('border-b border-[#2c2c2c] pl-[3px] pr-1', i % 2 ? 'h-[10px]' : 'h-[9px]', layer.selected ? 'bg-[#505050]' : 'bg-[#3c3c3c]')}
      >
        <div
          className={clsx('h-full border-l', layer.solid ? 'border-[#7c3a39] bg-[#7c3a39]' : 'border-[#9a9a9a]', layer.selected ? 'bg-linear-to-b from-[#a9a7cc] to-[#8f8cb8]' : !layer.solid && 'bg-[#747385]')}
          style={{ marginLeft: pct(layer.start), width: pct(layer.end - layer.start) }}
        />
      </div>
    ))}
    <div className="pointer-events-none absolute inset-y-0 left-[3px] right-1">
      <div className="absolute inset-y-0 w-px bg-[#3f86cf]" style={{ left: pct(8.2) }}>
        <svg viewBox="0 0 6 7" className="absolute -left-[3px] top-2 h-[7px] w-[7px]"><path d="M0 0h6v4.5L3 7 0 4.5z" fill="#2d8ceb" /></svg>
      </div>
    </div>
  </div>
);

const Timeline = () => (
  <section className="mt-[2px] flex shrink-0 flex-col bg-[#262626]">
    <div className="flex h-[18px] items-start gap-[6px] pl-[15px] pt-[2px]">
      <div className="flex h-3 items-center gap-[6px]"><span className="size-[6px] bg-[#b09a74]" /><button>Final Comp</button></div>
      <div className="ml-[22px] flex h-3 items-center gap-[6px]"><span className="size-[6px] bg-[#b09a74]" /><button>Scene 1 Color Control</button></div>
      <div className="ml-[15px] flex h-3 items-center gap-[5px] border-b border-[#c8c8c8]">
        <button aria-label="Close tab">×</button>
        <span className="size-[6px] bg-[#b09a74]" />
        <button className="font-semibold text-[#d0d0d0]">Text</button>
        <Burger />
      </div>
    </div>
    <div className="flex">
      <div className="w-[322px] shrink-0 pb-[41px]">
        <div className="flex h-[18px] items-center pl-[7px]">
          <div className="w-[52px] shrink-0 pb-[2px] font-semibold">
            <p className="text-[8px] leading-[9px] text-[#2d8ceb]">0:00:08:06</p>
            <p className="whitespace-nowrap text-[5px] font-normal leading-[7px] text-[#2a78c4]">00246 (29.97 fps)</p>
          </div>
          <label className="flex h-[10px] w-[151px] items-center bg-[#171717] pl-1">
            <Icon name="search" className="size-[7px]" />
            <span className="text-[4px]">▾</span>
            <input aria-label="Search layers" className="w-full min-w-0 bg-transparent outline-none" />
          </label>
          <div className="ml-[10px] flex flex-1 items-center justify-between pr-2">
            {['network', 'draft', 'shy', 'blend', 'blur', 'graph'].map(name => (
              <button key={name} aria-label={name}><Icon name={name} className="size-[9px]" /></button>
            ))}
          </div>
        </div>
        <LayerTable />
      </div>
      <Tracks />
      <div className="flex w-[11px] shrink-0 flex-col items-center gap-1 bg-[#212121] pt-[18px]">
        <Icon name="marker" />
        <Icon name="compButton" />
      </div>
    </div>
  </section>
);

const App = () => (
  <div className="flex h-screen min-h-[552px] flex-col bg-[#151515] font-['Noto_Sans',sans-serif] text-[6px] leading-[8px] text-[#bababa]">
    <header className="flex h-[9px] shrink-0 items-center bg-[#c6c6c6] pl-[5px] font-['Inter',sans-serif] text-[#2c2c2c]">
      <div className="flex w-0 gap-1">
        <span className="size-[6px] shrink-0 rounded-full bg-[#f2544d]" />
        <span className="size-[6px] shrink-0 rounded-full bg-[#f6bd3b]" />
        <span className="size-[6px] shrink-0 rounded-full bg-[#34c748]" />
      </div>
      <h1 className="flex-1 whitespace-pre text-center font-medium">Adobe After Effects 2020 - /Users/davidfinlay/Des ...   Rose 1/02_Project Files/02_After Effects/Instagram Stories Tara Rose.aep *</h1>
    </header>
    <div className="flex min-h-0 flex-1">
      <div className="w-[2px] shrink-0 bg-[#d4d4d4]">
        <div className="h-[54px] bg-[#3a3d42]" />
      </div>
      <div className="flex min-w-0 flex-1 flex-col border-r-3 border-[#171c24]">
        <Toolbar />
        <main className="flex min-h-0 flex-1 gap-[2px]">
          <ProjectPanel />
          <CompositionPanel />
          <aside className="flex w-[158px] shrink-0 flex-col gap-[2px]">
            <EzTools />
            <CharacterPanel />
          </aside>
        </main>
        <Timeline />
      </div>
    </div>
  </div>
);

export default App;
